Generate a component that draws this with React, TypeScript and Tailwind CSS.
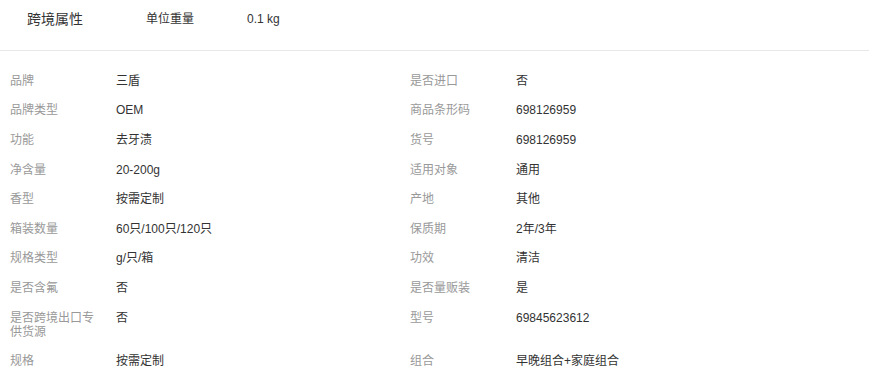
import React from 'react';

interface Attr {
    label: string;
    value: string;
}

const rows: [Attr, Attr][] = [
    [{ label: '品牌', value: '三盾' }, { label: '是否进口', value: '否' }],
    [{ label: '品牌类型', value: 'OEM' }, { label: '商品条形码', value: '698126959' }],
    [{ label: '功能', value: '去牙渍' }, { label: '货号', value: '698126959' }],
    [{ label: '净含量', value: '20-200g' }, { label: '适用对象', value: '通用' }],
    [{ label: '香型', value: '按需定制' }, { label: '产地', value: '其他' }],
    [{ label: '箱装数量', value: '60只/100只/120只' }, { label: '保质期', value: '2年/3年' }],
    [{ label: '规格类型', value: 'g/只/箱' }, { label: '功效', value: '清洁' }],
    [{ label: '是否含氟', value: '否' }, { label: '是否量贩装', value: '是' }],
    [{ label: '是否跨境出口专供货源', value: '否' }, { label: '型号', value: '69845623612' }],
    [{ label: '规格', value: '按需定制' }, { label: '组合', value: '早晚组合+家庭组合' }],
];

const Cell: React.FC<{ item: Attr }> = ({ item }) => (
    <div className="flex w-[400px] items-start py-[7.8px]">
        <div className="w-[116px] shrink-0 pl-[10px] pr-[20px] text-[#999]">{item.label}</div>
        <div className="flex-1 text-[#333]">{item.value}</div>
    </div>
);

const App: React.FC = () => {
    return (
        <div
            className="w-[869px] bg-white"
            style={{ fontFamily: '"Liberation Sans", Arial, "Noto Sans CJK SC", sans-serif' }}
        >
            {/* cross-border attributes */}
            <div className="flex h-[51px] items-start border-b border-[#e8e8e8] pt-[10px]">
                <div className="w-[146px] pl-[27px] text-[14px] leading-[18px] text-[#333]">跨境属性</div>
                <div className="w-[101px] pt-[2px] text-[12px] leading-[14px] text-[#333]">单位重量</div>
                <div className="pt-[2px] text-[12px] leading-[14px] text-[#333]">0.1 kg</div>
            </div>

            {/* product attributes */}
            <div className="pt-[15px] text-[12px] leading-[14px]">
                {rows.map(([left, right], i) => (
                    <div key={i} className="flex">
                        <Cell item={left} />
                        <Cell item={right} />
                    </div>
                ))}
            </div>
        </div>
    );
};

export default App;
